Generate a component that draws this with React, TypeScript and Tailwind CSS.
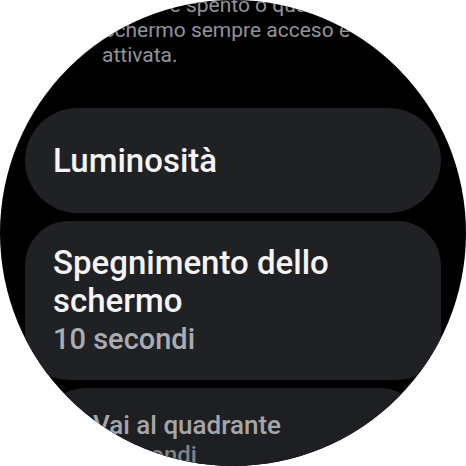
export default function App() {
  return (
    <div className="w-[466px] h-[466px] bg-white" style={{ fontFamily: "Roboto, 'Noto Sans', sans-serif" }}>
      <div className="w-[466px] h-[466px] rounded-full overflow-hidden bg-black flex flex-col">
        {/* description above, scrolled mostly out of view */}
        <p className="shrink-0 -mt-[7px] pl-[102px] pr-[20px] text-[21px] leading-[25px] text-[#919399] whitespace-nowrap">
          il vetro è spento o quando l'opzione
          <br />
          Schermo sempre acceso è
          <br />
          attivata.
        </p>

        <div className="shrink-0 mt-[40px] mx-[25px] h-[105px] rounded-full bg-[#202124] flex items-center px-[28px]">
          <span className="text-[33px] font-medium text-[#f4f4f4]">Luminosità</span>
        </div>

        <div className="shrink-0 mt-[8px] mx-[25px] rounded-[44px] bg-[#202124] px-[28px] pt-[23px] pb-[22px] flex flex-col">
          <span className="text-[33px] leading-[38px] font-medium text-[#f4f4f4]">
            Spegnimento dello
            <br />
            schermo
          </span>
          <span className="text-[29px] leading-[38px] font-medium text-[#a9acb3]">10 secondi</span>
        </div>

        <div className="shrink-0 mt-[8px] mx-[45px] rounded-[40px] bg-[#1e1f22] px-[48px] pt-[22px] pb-[20px] flex flex-col">
          <span className="text-[26px] leading-[30px] font-medium text-[#a5a6a9]">Vai al quadrante</span>
          <span className="text-[24px] leading-[30px] font-medium text-[#7f8186]">5 secondi</span>
        </div>
      </div>
    </div>
  );
}
